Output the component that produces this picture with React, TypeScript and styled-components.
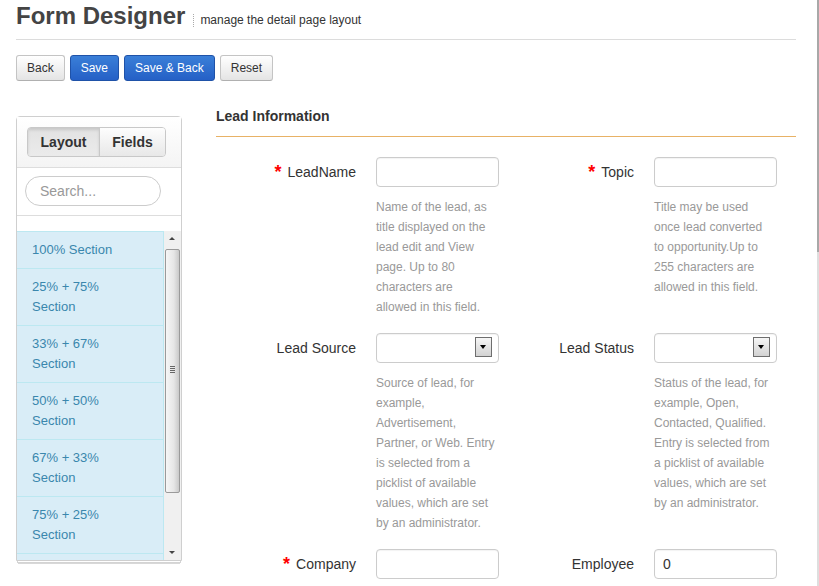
import React from "react";
import styled, {createGlobalStyle, css} from "styled-components";

const GlobalStyle = createGlobalStyle`
    html, body {
        margin: 0;
        padding: 0;
        background: #fff;
    }

    body {
        font-family: "Liberation Sans", Arial, sans-serif;
        color: #333;
    }

    * {
        box-sizing: border-box;
    }
`;

type Variant = "default" | "primary";

interface FieldDef {
    label: string;
    required?: boolean;
    kind: "text" | "select";
    value?: string;
    help?: string;
}

const rows: FieldDef[][] = [
    [
        {
            label: "LeadName",
            required: true,
            kind: "text",
            help: "Name of the lead, as title displayed on the lead edit and View page. Up to 80 characters are allowed in this field.",
        },
        {
            label: "Topic",
            required: true,
            kind: "text",
            help: "Title may be used once lead converted to opportunity.Up to 255 characters are allowed in this field.",
        },
    ],
    [
        {
            label: "Lead Source",
            kind: "select",
            help: "Source of lead, for example, Advertisement, Partner, or Web. Entry is selected from a picklist of available values, which are set by an administrator.",
        },
        {
            label: "Lead Status",
            kind: "select",
            help: "Status of the lead, for example, Open, Contacted, Qualified. Entry is selected from a picklist of available values, which are set by an administrator.",
        },
    ],
    [
        {label: "Company", required: true, kind: "text"},
        {label: "Employee", kind: "text", value: "0"},
    ],
];

const sections = [
    "100% Section",
    "25% + 75% Section",
    "33% + 67% Section",
    "50% + 50% Section",
    "67% + 33% Section",
    "75% + 25% Section",
    "33% + 33% + 33% Section",
];

const Field: React.FC<{field: FieldDef}> = ({field}) => (
    <FieldWrap>
        <Label>
            {field.required && <Required>*</Required>}
            {field.label}
        </Label>
        {field.kind === "select" ? (
            <SelectWrap>
                <Select defaultValue="">
                    <option value=""></option>
                </Select>
                <SelectButton/>
            </SelectWrap>
        ) : (
            <TextInput type="text" defaultValue={field.value ?? ""}/>
        )}
        {field.help && <Help>{field.help}</Help>}
    </FieldWrap>
);

export default function App() {
    return (
        <>
            <GlobalStyle/>
            <Page>
                <Header>
                    <Title>Form Designer</Title>
                    <Subtitle>manage the detail page layout</Subtitle>
                </Header>
                <Toolbar>
                    <Button $variant="default">Back</Button>
                    <Button $variant="primary">Save</Button>
                    <Button $variant="primary">Save &amp; Back</Button>
                    <Button $variant="default">Reset</Button>
                </Toolbar>
                <Content>
                    <Sidebar>
                        <SidebarHead>
                            <Segmented>
                                <SegmentButton $active>Layout</SegmentButton>
                                <SegmentButton>Fields</SegmentButton>
                            </Segmented>
                        </SidebarHead>
                        <SearchBar>
                            <SearchInput placeholder="Search..."/>
                        </SearchBar>
                        <ListGap/>
                        <ListArea>
                            <Items>
                                {sections.map((s) => (
                                    <Item key={s}>{s}</Item>
                                ))}
                            </Items>
                            <ScrollTrack>
                                <ScrollArrow $dir="up"/>
                                <ScrollThumb/>
                                <ScrollSpacer/>
                                <ScrollArrow $dir="down"/>
                            </ScrollTrack>
                        </ListArea>
                    </Sidebar>
                    <Main>
                        <SectionTitle>Lead Information</SectionTitle>
                        <FormGrid>
                            {rows.flat().map((f) => (
                                <Field key={f.label} field={f}/>
                            ))}
                        </FormGrid>
                    </Main>
                </Content>
            </Page>
            <WindowScrollEdge/>
        </>
    );
}

const Page = styled.div`
    width: 780px;
    margin: 0 0 0 16px;
`;

const Header = styled.header`
    display: flex;
    align-items: baseline;
    padding-top: 1px;
    padding-bottom: 8px;
    border-bottom: 1px solid #dcdcdc;
`;

const Title = styled.h1`
    margin: 0;
    font-size: 24px;
    line-height: 30px;
    font-weight: bold;
    color: #444;
`;

const Subtitle = styled.span`
    margin-left: 8px;
    padding-left: 6px;
    font-size: 12px;
    line-height: 13px;
    color: #333;
    border-left: 1px dotted #aaa;
`;

const Toolbar = styled.nav`
    display: flex;
    gap: 5px;
    margin-top: 15px;
`;

const Button = styled.button<{$variant: Variant}>`
    height: 26px;
    padding: 0 10px;
    font-family: inherit;
    font-size: 12px;
    border-radius: 3px;
    cursor: pointer;

    ${({$variant}) =>
            $variant === "primary"
                    ? css`
                        color: #fff;
                        background: linear-gradient(#3a7fd8, #2560c6);
                        border: 1px solid #1f52a8;
                    `
                    : css`
                        color: #333;
                        background: linear-gradient(#ffffff, #e4e4e4);
                        border: 1px solid #c4c4c4;
                        border-bottom-color: #b0b0b0;
                    `}
`;

const Content = styled.div`
    display: flex;
    align-items: flex-start;
    gap: 34px;
    margin-top: 19px;
`;

const Sidebar = styled.aside`
    width: 166px;
    flex: none;
    margin-top: 16px;
    border: 1px solid #cfcfcf;
    border-radius: 4px 4px 0 0;
    background: #fff;
    box-shadow: 0 3px 0 -2px #fff,
    0 3px 0 -1px #d4d4d4,
    0 5px 0 -3px #fff,
    0 5px 0 -2px #d8d8d8;
`;

const SidebarHead = styled.div`
    padding: 10px;
    border-bottom: 1px solid #dddddd;
    background: linear-gradient(#ffffff, #f4f4f4);
`;

const Segmented = styled.div`
    display: flex;
    width: 139px;
    border: 1px solid #c8c8c8;
    border-radius: 4px;
    overflow: hidden;
`;

const SegmentButton = styled.div<{$active?: boolean}>`
    flex: ${({$active}) => ($active ? "0 0 72px" : "1")};
    height: 28px;
    line-height: 28px;
    text-align: center;
    font-size: 14px;
    font-weight: bold;
    color: #333;
    background: ${({$active}) =>
            $active ? "linear-gradient(#e2e2e2, #ebebeb)" : "linear-gradient(#fdfdfd, #e8e8e8)"};
    box-shadow: ${({$active}) => ($active ? "inset 0 2px 3px rgba(0,0,0,0.12)" : "none")};
    border-right: ${({$active}) => ($active ? "1px solid #c8c8c8" : "none")};
`;

const SearchBar = styled.div`
    padding: 8px 0 9px 8px;
    border-bottom: 1px solid #dddddd;
`;

const SearchInput = styled.input`
    display: block;
    width: 136px;
    height: 30px;
    padding: 0 14px;
    font-family: inherit;
    font-size: 14px;
    color: #333;
    border: 1px solid #cccccc;
    border-radius: 15px;
    outline: none;

    &::placeholder {
        color: #999;
    }
`;

const ListGap = styled.div`
    height: 15px;
`;

const ListArea = styled.div`
    display: flex;
    height: 329px;
    overflow: hidden;
`;

const Items = styled.div`
    width: 147px;
    flex: none;
    border-right: 1px solid #bce8f1;
    background: #d9edf7;
`;

const Item = styled.div`
    padding: 8px 30px 8px 15px;
    font-size: 13px;
    line-height: 20px;
    color: #3a87ad;
    border-top: 1px solid #bce8f1;
`;

const ScrollTrack = styled.div`
    display: flex;
    flex-direction: column;
    width: 17px;
    flex: none;
    background: #f0f0f0;
`;

const ScrollArrow = styled.div<{$dir: "up" | "down"}>`
    position: relative;
    height: 16px;
    flex: none;

    &::after {
        content: "";
        position: absolute;
        left: 5px;
        top: ${({$dir}) => ($dir === "up" ? "6px" : "7px")};
        border-left: 3px solid transparent;
        border-right: 3px solid transparent;
        ${({$dir}) =>
                $dir === "up" ? "border-bottom: 3px solid #444;" : "border-top: 3px solid #444;"}
    }
`;

const ScrollThumb = styled.div`
    position: relative;
    height: 244px;
    margin: 2px 1px 0;
    flex: none;
    border: 1px solid #9a9a9a;
    border-radius: 2px;
    background: linear-gradient(to right, #f6f6f6, #e6e6e6 60%, #c9c9c9);

    &::after {
        content: "";
        position: absolute;
        left: 4px;
        right: 4px;
        top: 116px;
        height: 7px;
        background: repeating-linear-gradient(#666 0 1px, transparent 1px 2px);
    }
`;

const ScrollSpacer = styled.div`
    flex: 1;
`;

const Main = styled.main`
    flex: 1;
    min-width: 0;
`;

const SectionTitle = styled.h3`
    margin: 0;
    padding: 6px 0 10px;
    font-size: 14px;
    line-height: 20px;
    font-weight: bold;
    color: #333;
    border-bottom: 1px solid #e8b266;
`;

const FormGrid = styled.div`
    display: grid;
    grid-template-columns: 278px 278px;
    row-gap: 16px;
    margin-top: 20px;
    padding-left: 5px;
`;

const FieldWrap = styled.div`
    display: grid;
    grid-template-columns: 1fr 123px;
    column-gap: 20px;
    align-content: start;
`;

const Label = styled.label`
    grid-column: 1;
    text-align: right;
    font-size: 14px;
    line-height: 30px;
    color: #333;
    white-space: nowrap;
`;

const Required = styled.span`
    margin-right: 6px;
    font-size: 18px;
    font-weight: bold;
    color: #f00;
    vertical-align: -1px;
`;

const controlStyle = css`
    display: block;
    width: 123px;
    height: 30px;
    padding: 0 8px;
    font-family: inherit;
    font-size: 14px;
    color: #333;
    background: #fff;
    border: 1px solid #cccccc;
    border-radius: 4px;
    box-shadow: inset 0 1px 1px rgba(0, 0, 0, 0.05);
    outline: none;
`;

const TextInput = styled.input`
    ${controlStyle};
    grid-column: 2;
`;

const SelectWrap = styled.div`
    grid-column: 2;
    position: relative;
`;

const Select = styled.select`
    ${controlStyle};
    appearance: none;
`;

const SelectButton = styled.span`
    position: absolute;
    right: 7px;
    top: 4px;
    width: 17px;
    height: 20px;
    border: 1px solid #6e6e6e;
    background: linear-gradient(#f6f6f6, #d2d2d2);
    pointer-events: none;

    &::after {
        content: "";
        position: absolute;
        left: 4px;
        top: 7px;
        border-left: 3.5px solid transparent;
        border-right: 3.5px solid transparent;
        border-top: 4px solid #000;
    }
`;

const Help = styled.div`
    grid-column: 2;
    width: 120px;
    margin-top: 10px;
    font-size: 12px;
    line-height: 20px;
    color: #999;
`;

const WindowScrollEdge = styled.div`
    position: fixed;
    top: 0;
    left: 817px;
    width: 2px;
    height: 100%;
    background: linear-gradient(#a8a8a8 0, #a8a8a8 252px, #dedede 252px);
`;
